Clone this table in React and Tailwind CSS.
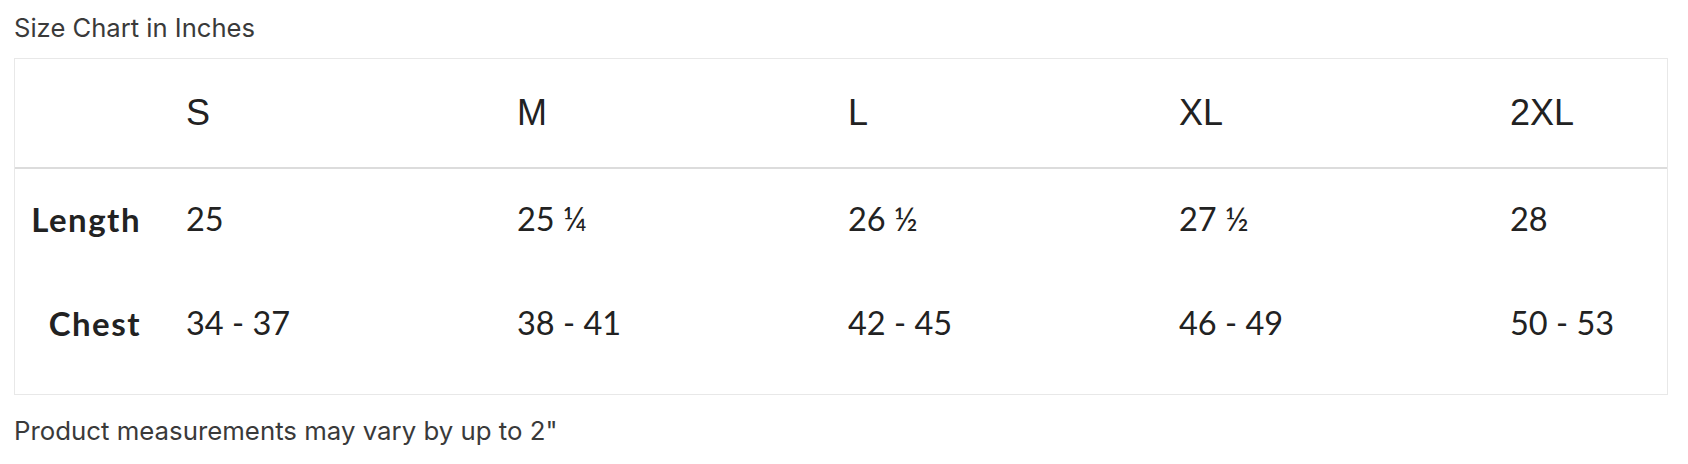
import React from 'react';

const sizes = ['S', 'M', 'L', 'XL', '2XL'];

const rows = [
  { label: 'Length', values: ['25', '25 ¼', '26 ½', '27 ½', '28'] },
  { label: 'Chest', values: ['34 - 37', '38 - 41', '42 - 45', '46 - 49', '50 - 53'] },
];

const cols = 'grid grid-cols-[171px_331px_331px_331px_331px_1fr]';

const App = () => {
  return (
    <div className="w-[1688px] h-[464px] bg-white px-[14px] pt-[12px]">
      <p className="font-['Inter',sans-serif] text-[25.6px] leading-[32px] text-[#3a3a3a]">
        Size Chart in Inches
      </p>

      <div className="mt-[14px] w-[1654px] border border-[#e8e8e8]">
        <div className={`${cols} h-[110px] items-center border-b-2 border-[#dcdcdc]`}>
          <div />
          {sizes.map((s) => (
            <div key={s} className="font-['Liberation_Sans',Arial,sans-serif] text-[36px] leading-none text-[#222]">
              {s}
            </div>
          ))}
        </div>

        <div className="pb-[17px]">
          {rows.map((row) => (
            <div key={row.label} className={`${cols} h-[104px] items-center`}>
              <div className="pb-[4px] pr-[45px] text-right font-['Lato',sans-serif] text-[33px] font-bold leading-none tracking-[1.5px] text-[#222]">
                {row.label}
              </div>
              {row.values.map((v, i) => (
                <div key={i} className="pb-[4px] font-['Lato',sans-serif] text-[32.5px] leading-none text-[#222]">
                  {v}
                </div>
              ))}
            </div>
          ))}
        </div>
      </div>

      <p className="mt-[20px] font-['Inter',sans-serif] text-[25.8px] leading-[32px] text-[#3a3a3a]">
        Product measurements may vary by up to 2"
      </p>
    </div>
  );
};

export default App;
